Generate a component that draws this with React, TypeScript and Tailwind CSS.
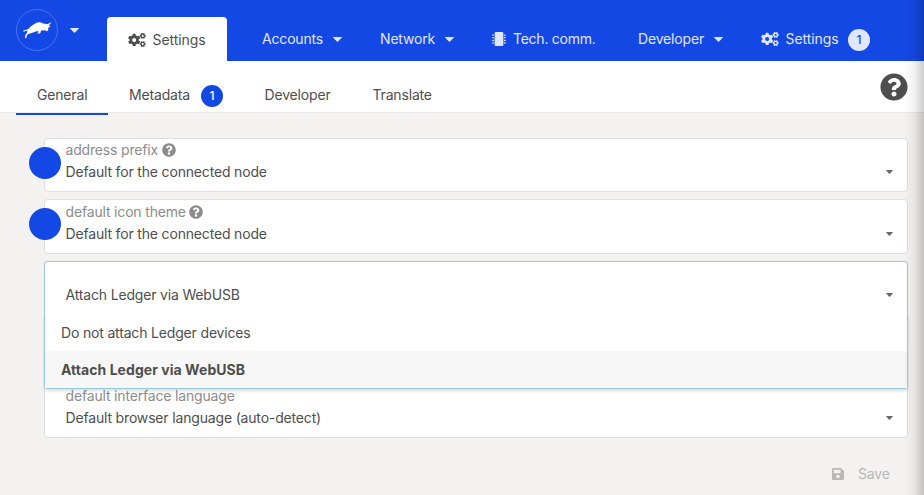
import React from 'react';
import { FaCogs, FaMicrochip, FaQuestionCircle, FaSave } from 'react-icons/fa';

function Caret({ className = 'h-[5px] w-[9px]' }: { className?: string }) {
  return (
    <svg viewBox="0 0 9 5" className={'shrink-0 ' + className} fill="currentColor">
      <path d="M0.6 0h7.8q.9 0 .3.7L5 4.600q-.5.500-1 0L.3.700Q-.3 0 .6 0z" />
    </svg>
  );
}

function Bull() {
  return (
    <svg viewBox="0 0 30 19" className="h-[19px] w-[30px]" fill="white">
      <path d="M1 9.700Q3 9 6 8.300L9.500 4.700Q12 3.300 14.500 1.700Q17 .7 19 1.600Q20 2.700 22.500 2.800Q24 2.600 25 3.300L27.500 2.300L28.700 .9L28.600 2.800L26.800 4.200L27.300 5.200L28.800 4.600L27.700 6L26.300 6.600L26.200 9.200L24.700 10.200L23 9.200L21.600 9.200L20.600 10L20.400 8.700L18.900 9.900L18.500 11.800L17.400 12.500L14.900 12.600L16.500 11.200L16.200 9.900Q13.500 10 11.800 11.300L9.500 12.100L6.400 12.900L4.900 14.300L4.400 17L3 17.300L3.400 14L5 11.800L5.400 9.500Q3.200 10 1.900 10.800Z" />
    </svg>
  );
}

function Field({
  label,
  value,
  help,
  className = '',
  labelClass = 'h-[21px]',
}: {
  label?: string;
  value: string;
  help?: boolean;
  className?: string;
  labelClass?: string;
}) {
  return (
    <div className={'relative rounded border bg-white pl-[20.500px] ' + className}>
      <div className={'flex items-center text-[#8c8c8c] ' + labelClass}>
        {label}
        {help && <FaQuestionCircle className="ml-[3.500px] h-[14px] w-[14px]" />}
      </div>
      <div className="flex h-[24px] items-center justify-between pr-[14px]">
        <span>{value}</span>
        <Caret className="h-[4px] w-[7px] text-[#696969]" />
      </div>
    </div>
  );
}

export default function App() {
  return (
    <div className="relative h-[495px] w-[924px] overflow-hidden bg-[#f3f2f1] font-['Inter','Liberation_Sans',sans-serif] text-[14px] leading-5 tracking-[-0.17px] text-[#4e4e4e]">
      <header className="flex h-[61px] bg-[#1448e5] text-[#e0e6fb]">
        <div className="ml-4 mt-[9px] flex h-[42px] w-[42px] items-center justify-center rounded-full border border-[#4b72ec]">
          <Bull />
        </div>
        <Caret className="ml-3 mt-7 h-[5px] w-[9px]" />
        <div className="ml-7 mt-[17px] flex h-11 w-[120px] items-center rounded-t bg-white pl-[21px] pt-[2px] text-[#4e4e4e]">
          <FaCogs className="h-[14px] w-[18px]" />
          <span className="ml-[6.500px] tracking-[-0.05px]">Settings</span>
        </div>
        <nav className="mt-[29px] flex h-5 items-center">
          <div className="ml-[35px] flex w-[118px] items-center">
            <span className="w-[71px]">Accounts</span>
            <Caret className="mt-[1px] h-[5px] w-[9px]" />
          </div>
          <div className="flex w-[112px] items-center">
            <span className="w-[64.500px]">Network</span>
            <Caret className="mt-[1px] h-[5px] w-[9px]" />
          </div>
          <div className="flex w-[146px] items-center">
            <FaMicrochip className="h-[14px] w-[14px]" />
            <span className="ml-[7px] tracking-[-0.25px]">Tech. comm.</span>
          </div>
          <div className="flex w-[123px] items-center">
            <span className="w-[76px]">Developer</span>
            <Caret className="mt-[1px] h-[5px] w-[9px]" />
          </div>
          <div className="flex items-center">
            <FaCogs className="h-[14px] w-[18px]" />
            <span className="ml-[6.500px] w-[62.500px] tracking-[-0.05px]">Settings</span>
            <span className="mt-[2px] flex h-[22px] w-[22px] items-center justify-center rounded-full bg-[#e0e6fb] text-[12px] font-medium text-[#1448e5]">1</span>
          </div>
        </nav>
      </header>

      <div className="flex h-[52px] border-b border-[#e8e8e8] bg-white pl-4">
        <div className="h-[54px] w-[92px] border-b-2 border-[#1448e5] pl-[21px] pt-6">General</div>
        <div className="flex h-5 w-[135.500px] pl-[21px]">
          <span className="mt-6 w-[72px]">Metadata</span>
          <span className="mt-6 flex h-[22px] w-[22px] items-center justify-center rounded-full bg-[#1448e5] text-[12px] font-medium text-white">1</span>
        </div>
        <div className="w-[108px] pl-[21px] pt-6">Developer</div>
        <div className="pl-[21px] pt-6">Translate</div>
        <FaQuestionCircle className="ml-auto mr-4 mt-3 h-7 w-7" />
      </div>

      <main className="ml-11 mt-[25px] w-[864px]">
        <div className="relative">
          <Field label="address prefix" value="Default for the connected node" help className="h-[54px] border-[#dedede]" />
          <span className="absolute -left-[15px] top-[9px] h-8 w-8 rounded-full bg-[#1448e5]" />
        </div>
        <div className="relative mt-[7px]">
          <Field label="default icon theme" value="Default for the connected node" help className="h-[55px] border-[#dedede]" labelClass="h-[22px] pt-[1px]" />
          <span className="absolute -left-[15px] top-[9px] h-8 w-8 rounded-full bg-[#1448e5]" />
        </div>
        <div className="relative z-10 mt-[7px]">
          <Field value="Attach Ledger via WebUSB" className="h-[54px] rounded-b-none border-b-0 border-[#96c8da]" />
          <div className="absolute left-0 top-[53px] w-full rounded-b border border-t-0 border-[#96c8da] bg-white shadow-[0_2px_3px_0_rgba(34,36,38,0.15)]">
            <div className="flex h-[37px] items-center pl-4">Do not attach Ledger devices</div>
            <div className="flex h-[37px] items-center bg-[#f7f7f7] pl-4 font-bold tracking-[0.05px]">Attach Ledger via WebUSB</div>
          </div>
        </div>
        <Field label="default interface language" value="Default browser language (auto-detect)" className="mt-[69px] h-[54px] border-[#dedede]" />
        <div className="mt-[26px] flex h-5 items-center pl-[788px] text-[#b8b8b7]">
          <FaSave className="h-[14px] w-[12px]" />
          <span className="ml-[14px]">Save</span>
        </div>
      </main>

      <div className="pointer-events-none absolute inset-y-0 right-0 z-20 w-[20px] bg-gradient-to-r from-transparent via-black/5 to-black/20" />
    </div>
  );
}
